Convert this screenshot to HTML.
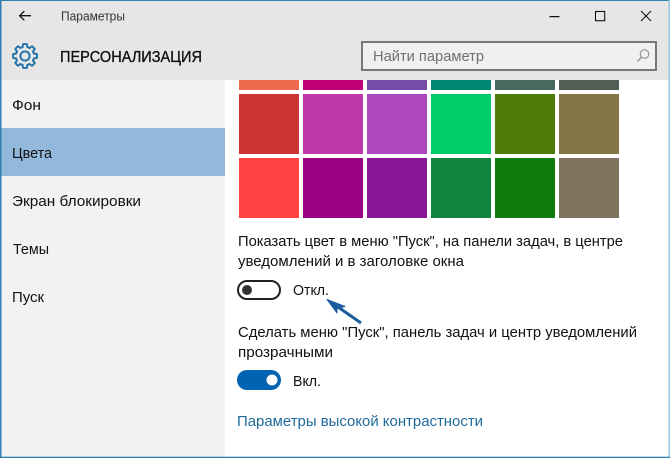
<!DOCTYPE html>
<html lang="ru">
<head>
<meta charset="utf-8">
<title>Параметры</title>
<style>
html,body{margin:0;padding:0;background:#fff;width:670px;height:458px;overflow:hidden}
svg{display:block}
text{font-family:"Liberation Sans",sans-serif;font-size:15px;fill:#111}
</style>
</head>
<body>
<svg width="670" height="458" viewBox="0 0 670 458" xmlns="http://www.w3.org/2000/svg">
<rect width="670" height="458" fill="#fff"/>
<rect x="0" y="0" width="670" height="80" fill="#e6e6e6"/>
<rect x="0" y="80" width="225" height="378" fill="#f2f2f2"/>
<rect x="0" y="128" width="225" height="48" fill="#92b9db"/>

<!-- swatches -->
<g>
<rect x="239" y="80" width="60" height="10" fill="#ee6a4c"/>
<rect x="303" y="80" width="60" height="10" fill="#bf0077"/>
<rect x="367" y="80" width="60" height="10" fill="#744da9"/>
<rect x="431" y="80" width="60" height="10" fill="#018574"/>
<rect x="495" y="80" width="60" height="10" fill="#486860"/>
<rect x="559" y="80" width="60" height="10" fill="#525e54"/>
<rect x="239" y="94" width="60" height="60" fill="#ca3435"/>
<rect x="303" y="94" width="60" height="60" fill="#bf39ad"/>
<rect x="367" y="94" width="60" height="60" fill="#ae48bf"/>
<rect x="431" y="94" width="60" height="60" fill="#00cc6a"/>
<rect x="495" y="94" width="60" height="60" fill="#4f7c0a"/>
<rect x="559" y="94" width="60" height="60" fill="#847545"/>
<rect x="239" y="158" width="60" height="60" fill="#ff4343"/>
<rect x="303" y="158" width="60" height="60" fill="#9a0082"/>
<rect x="367" y="158" width="60" height="60" fill="#881798"/>
<rect x="431" y="158" width="60" height="60" fill="#10843e"/>
<rect x="495" y="158" width="60" height="60" fill="#107c10"/>
<rect x="559" y="158" width="60" height="60" fill="#7e735f"/>
</g>

<!-- window borders -->
<rect x="0" y="0" width="670" height="1" fill="#2f7fb2"/>
<rect x="0" y="0" width="1.5" height="458" fill="#2f7fb2"/>
<rect x="668.5" y="0" width="1.5" height="458" fill="#9cc4de"/>
<rect x="0" y="456.7" width="670" height="1.3" fill="#2f7fb2"/>

<!-- back arrow -->
<path d="M31 15.7H19.8M24.3 11.1L19.6 15.7L24.3 20.3" fill="none" stroke="#111" stroke-width="1.3"/>
<text x="61" y="20.5" style="font-size:12.5px;fill:#333" textLength="64" lengthAdjust="spacingAndGlyphs">Параметры</text>

<!-- window controls -->
<rect x="549.5" y="16" width="10" height="1.2" fill="#111"/>
<rect x="595.5" y="11.5" width="9.2" height="9.2" fill="none" stroke="#111" stroke-width="1.1"/>
<path d="M641 11L651 21M651 11L641 21" fill="none" stroke="#111" stroke-width="1.1"/>

<!-- gear -->
<g transform="translate(25 56)" fill="none" stroke="#1f6fa8" stroke-width="1.9" stroke-linejoin="round" stroke-linecap="round">
<circle r="4.6"/>
<path d="M8.9-2.4L11.9-1.9L11.9 1.9L8.9 2.4A9.2 9.2 0 0 1 8 4.6"/>
<path d="M8.9-2.4L11.9-1.9L11.9 1.9L8.9 2.4A9.2 9.2 0 0 1 8 4.6" transform="rotate(45)"/>
<path d="M8.9-2.4L11.9-1.9L11.9 1.9L8.9 2.4A9.2 9.2 0 0 1 8 4.6" transform="rotate(90)"/>
<path d="M8.9-2.4L11.9-1.9L11.9 1.9L8.9 2.4A9.2 9.2 0 0 1 8 4.6" transform="rotate(135)"/>
<path d="M8.9-2.4L11.9-1.9L11.9 1.9L8.9 2.4A9.2 9.2 0 0 1 8 4.6" transform="rotate(180)"/>
<path d="M8.9-2.4L11.9-1.9L11.9 1.9L8.9 2.4A9.2 9.2 0 0 1 8 4.6" transform="rotate(225)"/>
<path d="M8.9-2.4L11.9-1.9L11.9 1.9L8.9 2.4A9.2 9.2 0 0 1 8 4.6" transform="rotate(270)"/>
<path d="M8.9-2.4L11.9-1.9L11.9 1.9L8.9 2.4A9.2 9.2 0 0 1 8 4.6" transform="rotate(315)"/>
</g>
<text x="60" y="62" style="font-size:16px;fill:#111;stroke:#111;stroke-width:.35px" textLength="142" lengthAdjust="spacingAndGlyphs">ПЕРСОНАЛИЗАЦИЯ</text>

<!-- search -->
<rect x="362" y="42" width="294" height="28" fill="#f0f0f0" stroke="#787878" stroke-width="2"/>
<text x="373" y="61" style="font-size:15px;fill:#707070" textLength="111" lengthAdjust="spacingAndGlyphs">Найти параметр</text>
<circle cx="644.5" cy="54" r="4.3" fill="none" stroke="#8a8a8a" stroke-width="1"/>
<path d="M641.3 57.3L637.5 61.5" fill="none" stroke="#8a8a8a" stroke-width="1.2"/>

<!-- sidebar -->
<text x="12" y="110" textLength="29" lengthAdjust="spacingAndGlyphs">Фон</text>
<text x="12" y="158" textLength="40" lengthAdjust="spacingAndGlyphs">Цвета</text>
<text x="12" y="206" textLength="129" lengthAdjust="spacingAndGlyphs">Экран блокировки</text>
<text x="13" y="254" textLength="36" lengthAdjust="spacingAndGlyphs">Темы</text>
<text x="12" y="302" textLength="32" lengthAdjust="spacingAndGlyphs">Пуск</text>

<!-- content -->
<text x="238" y="246" textLength="385" lengthAdjust="spacingAndGlyphs">Показать цвет в меню "Пуск", на панели задач, в центре</text>
<text x="238" y="266" textLength="226" lengthAdjust="spacingAndGlyphs">уведомлений и в заголовке окна</text>

<rect x="238" y="281" width="42" height="18" rx="9" fill="#fff" stroke="#222" stroke-width="2"/>
<circle cx="247" cy="290" r="5" fill="#333"/>
<text x="293" y="295" textLength="36" lengthAdjust="spacingAndGlyphs">Откл.</text>

<path d="M361 323L338 307" fill="none" stroke="#1a5c9c" stroke-width="3"/>
<path d="M327 299.5L345 306.5L337 308.5L337 313Z" fill="#1a5c9c" stroke="#1a5c9c" stroke-width="1" stroke-linejoin="round"/>

<text x="238" y="337" textLength="399" lengthAdjust="spacingAndGlyphs">Сделать меню "Пуск", панель задач и центр уведомлений</text>
<text x="238" y="357" textLength="95" lengthAdjust="spacingAndGlyphs">прозрачными</text>

<rect x="237" y="370" width="44" height="20" rx="10" fill="#0063b1"/>
<circle cx="272" cy="380" r="5.5" fill="#fff"/>
<text x="293" y="386" textLength="28" lengthAdjust="spacingAndGlyphs">Вкл.</text>

<text x="237" y="426" style="font-size:15px;fill:#1f6a9c" textLength="246" lengthAdjust="spacingAndGlyphs">Параметры высокой контрастности</text>
</svg>
</body>
</html>
